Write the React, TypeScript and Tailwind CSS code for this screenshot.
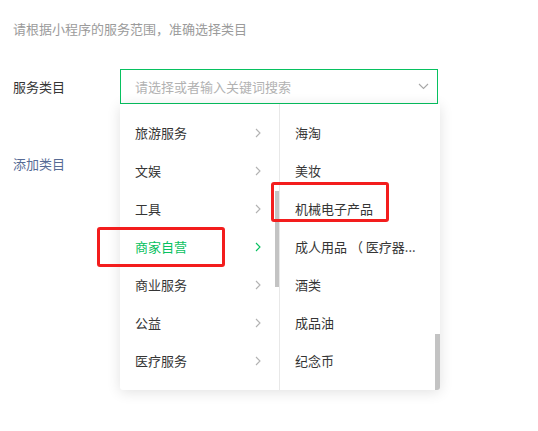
const leftItems = ['旅游服务', '文娱', '工具', '商家自营', '商业服务', '公益', '医疗服务'];
const rightItems = ['海淘', '美妆', '机械电子产品', '成人用品 （ 医疗器...', '酒类', '成品油', '纪念币'];

function Chevron({ active }: { active?: boolean }) {
  return (
    <svg width="6" height="10" viewBox="0 0 6 10" fill="none">
      <path d="M1 1l4 4-4 4" stroke={active ? '#07c160' : '#b2b2b2'} strokeWidth="1.1" />
    </svg>
  );
}

export default function App() {
  return (
    <div className="w-[538px] h-[431px] bg-white font-['Noto_Sans_CJK_SC','Noto_Sans',sans-serif] text-[13px] text-[#353535]">
      <div className="px-[13px] pt-[20px]">
        <p className="leading-[18px] text-[#9b9b9b]">请根据小程序的服务范围，准确选择类目</p>

        <div className="mt-[31px] flex">
          <div className="w-[107px] h-[35px] flex items-center">服务类目</div>
          <div className="relative w-[318px]">
            <div className="h-[35px] border border-[#07c160] flex items-center pl-[14px] pr-[8px]">
              <span className="flex-1 text-[#b2b2b2]">请选择或者输入关键词搜索</span>
              <svg width="11" height="7" viewBox="0 0 11 7" fill="none">
                <path d="M1 1l4.5 4.5L10 1" stroke="#a8a8a8" strokeWidth="1.1" />
              </svg>
            </div>

            {/* dropdown */}
            <div className="absolute left-0 top-full w-[320px] flex bg-white rounded-b-[3px] shadow-[0_2px_14px_rgba(0,0,0,0.12)]">
              <div className="relative w-[160px] py-[10px] border-r border-[#e8e8e8]">
                {leftItems.map((t) => (
                  <div key={t} className="h-[38px] flex items-center justify-between pl-[15px] pr-[18px]">
                    <span className={t === '商家自营' ? 'text-[#07c160]' : ''}>{t}</span>
                    <Chevron active={t === '商家自营'} />
                  </div>
                ))}
                <div className="absolute right-0 top-[87px] w-[4px] h-[96px] bg-[#c3c3c3]" />
              </div>
              <div className="relative w-[160px] py-[10px]">
                {rightItems.map((t) => (
                  <div key={t} className="h-[38px] flex items-center pl-[15px] pr-[10px] whitespace-nowrap">
                    <span>{t}</span>
                  </div>
                ))}
                <div className="absolute right-0 bottom-0 w-[5px] h-[56px] bg-[#c3c3c3] rounded-br-[3px]" />
              </div>
            </div>

            {/* highlight boxes */}
            <div className="absolute left-[-23px] top-[158px] w-[128px] h-[40px] border-[3px] border-[#f31d1d] rounded-[3px]" />
            <div className="absolute left-[151px] top-[113px] w-[118px] h-[40px] border-[3px] border-[#f31d1d] rounded-[3px]" />
          </div>
        </div>

        <div className="mt-[51px] leading-[18px] text-[#576b95]">添加类目</div>
      </div>
    </div>
  );
}
